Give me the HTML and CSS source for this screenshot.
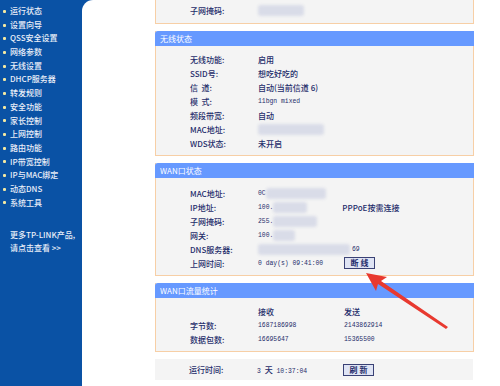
FILE: index.html
```html
<!DOCTYPE html>
<html lang="zh-CN">
<head>
    <meta charset="UTF-8">
    <title>运行状态</title>
    <link rel="stylesheet" href="styles.css">
</head>
<body>
    <div class="page">
        <!-- left menu -->
        <div class="menu">
            <ul>
                <li>运行状态</li>
                <li>设置向导</li>
                <li>QSS安全设置</li>
                <li>网络参数</li>
                <li>无线设置</li>
                <li>DHCP服务器</li>
                <li>转发规则</li>
                <li>安全功能</li>
                <li>家长控制</li>
                <li>上网控制</li>
                <li>路由功能</li>
                <li>IP带宽控制</li>
                <li>IP与MAC绑定</li>
                <li>动态DNS</li>
                <li>系统工具</li>
            </ul>
            <p class="more">更多TP-LINK产品,<br>请点击查看 &gt;&gt;</p>
        </div>

        <div class="main">
            <!-- LAN (cut off at top) -->
            <div class="panel panel-cut">
                <div class="panel-body">
                    <div class="row"><span class="label">子网掩码:</span><span class="blur w46"></span></div>
                </div>
            </div>

            <div class="panel">
                <div class="panel-head">无线状态</div>
                <div class="panel-body">
                    <div class="row"><span class="label">无线功能:</span><span class="value">启用</span></div>
                    <div class="row"><span class="label">SSID号:</span><span class="value">想吃好吃的</span></div>
                    <div class="row"><span class="label">信&nbsp;&nbsp;道:</span><span class="value">自动(当前信道 6)</span></div>
                    <div class="row"><span class="label">模&nbsp;&nbsp;式:</span><span class="value mono">11bgn mixed</span></div>
                    <div class="row"><span class="label">频段带宽:</span><span class="value">自动</span></div>
                    <div class="row"><span class="label">MAC地址:</span><span class="blur w66"></span></div>
                    <div class="row"><span class="label">WDS状态:</span><span class="value">未开启</span></div>
                </div>
            </div>

            <div class="panel">
                <div class="panel-head">WAN口状态</div>
                <div class="panel-body body-wan">
                    <div class="row"><span class="label">MAC地址:</span><span class="value mono">0C</span><span class="blur w60"></span></div>
                    <div class="row"><span class="label">IP地址:</span><span class="value mono">100.</span><span class="blur w34"></span><span class="value">PPPoE按需连接</span></div>
                    <div class="row"><span class="label">子网掩码:</span><span class="value mono">255.</span><span class="blur w44"></span></div>
                    <div class="row"><span class="label">网关:</span><span class="value mono">100.</span><span class="blur w22"></span></div>
                    <div class="row"><span class="label">DNS服务器:</span><span class="blur w92"></span><span class="value mono">69</span></div>
                    <div class="row"><span class="label">上网时间:</span><span class="value mono col">0 day(s) 09:41:00</span><button class="btn">断 线</button></div>
                </div>
            </div>

            <div class="panel">
                <div class="panel-head">WAN口流量统计</div>
                <div class="panel-body">
                    <div class="row"><span class="label"></span><span class="value col">接收</span><span class="value">发送</span></div>
                    <div class="row"><span class="label">字节数:</span><span class="value mono col">1687186998</span><span class="value mono">2143862914</span></div>
                    <div class="row"><span class="label">数据包数:</span><span class="value mono col">16695647</span><span class="value mono">15365500</span></div>
                </div>
            </div>

            <div class="uptime">
                <span class="label">运行时间:</span><span class="value mono col">3 <span class="cn">天</span> 10:37:04</span><button class="btn">刷 新</button>
            </div>
        </div>

        <!-- red arrow pointing at the disconnect button -->
        <svg class="arrow" width="500" height="386" viewBox="0 0 500 386">
            <polygon points="366,273 387,277 381,281 448,327 446,329 378,284 376,291" fill="#e8392f"/>
        </svg>
    </div>
</body>
</html>
```

FILE: styles.css
```css
/* router status page */
body {
    margin: 0;
    background: #fff;
    font-family: "Noto Sans CJK SC", sans-serif;
    font-size: 8px;
    font-weight: 500;
    color: #1f2d6b;
}

.page {
    position: relative;
    display: flex;
    width: 500px;
    height: 386px;
    overflow: hidden;
    background: #0a52a5;
}

.menu {
    width: 82px;
    flex-shrink: 0;
    background: #0a52a5;
    color: #e9eef8;
}

.menu ul {
    list-style: none;
    margin: 0;
    padding: 4px 0 0 3px;
}

.menu li {
    height: 13.7px;
    line-height: 13.7px;
    font-size: 8px;
    white-space: nowrap;
}

.menu li::before {
    content: "";
    display: inline-block;
    width: 3px;
    height: 3px;
    margin: 0 4px 1px 0;
    background: #f3e9a2;
    border-radius: 1px;
    vertical-align: middle;
}

.menu .more {
    margin: 19px 0 0 10px;
    font-size: 8px;
    line-height: 13px;
    white-space: nowrap;
}

.main {
    flex: 1;
    background: #fff;
    border-top-left-radius: 11px;
    padding-left: 73px;
}

.panel {
    width: 317px;
    margin-bottom: 7px;
    background: #f4f4f4;
    border: 1px solid #f7cfa6;
    border-top: none;
}

.panel-cut {
    height: 23px;
}

.panel-head {
    height: 15px;
    line-height: 15px;
    margin: 0 -1px;
    padding-left: 5px;
    background: #6699ff;
    color: #fff;
    font-size: 8px;
    font-weight: 400;
    border-top-left-radius: 3px;
}

.panel-body {
    padding: 6px 0 5px;
}

.panel-cut .panel-body {
    padding-top: 3px;
}

.body-wan {
    padding-top: 8px;
}

.row {
    display: flex;
    align-items: center;
    height: 14px;
}

.label {
    width: 68px;
    margin-left: 34px;
    flex-shrink: 0;
    white-space: nowrap;
}

.value {
    white-space: nowrap;
}

.mono {
    font-family: "Liberation Mono", "Noto Sans CJK SC", monospace;
    font-size: 6.4px;
}

.col {
    width: 86px;
    flex-shrink: 0;
}

.blur {
    display: inline-block;
    height: 11px;
    background: #d9dce8;
    border-radius: 3px;
    filter: blur(1.5px);
}

.w22 { width: 22px; }
.w34 { width: 34px; margin-right: 35px; }
.w44 { width: 44px; }
.w46 { width: 46px; }
.w60 { width: 60px; }
.w66 { width: 66px; }
.w92 { width: 92px; margin-right: 2px; }

.btn {
    height: 12px;
    width: 31px;
    padding: 0;
    border: 1px solid #3a4175;
    background: #dfe4f4;
    color: #1f2d6b;
    font-family: "Noto Sans CJK SC", sans-serif;
    font-size: 8px;
    font-weight: bold;
    line-height: 10px;
}

.uptime {
    display: flex;
    align-items: center;
    width: 318px;
    height: 21px;
    background: #f4f4f4;
}

.cn {
    font-family: "Noto Sans CJK SC", sans-serif;
    font-size: 8px;
}

.arrow {
    position: absolute;
    left: 0;
    top: 0;
}
```
